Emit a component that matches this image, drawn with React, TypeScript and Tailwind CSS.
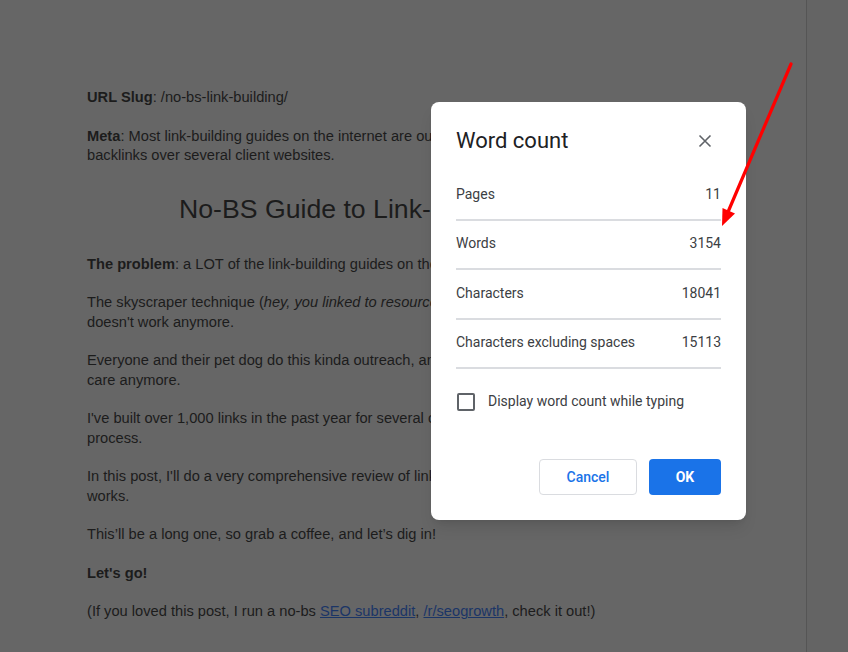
import React from "react";

const docFont = { fontFamily: '"Liberation Sans", Arial, sans-serif' };
const uiFont = { fontFamily: 'Roboto, "Noto Sans", Arial, sans-serif' };

function Line({ children }: { children: React.ReactNode }) {
  return <div className="whitespace-nowrap h-[19.5px] leading-[19.5px]">{children}</div>;
}

function Para({ children, className = "" }: { children: React.ReactNode; className?: string }) {
  return <div className={"mb-[19px] " + className}>{children}</div>;
}

function Row({ label, value }: { label: string; value: string }) {
  return (
    <div className="flex h-[49.5px] items-center justify-between border-b-2 border-[#dadce0] pb-[1px] text-[14px] text-[#3c4043]">
      <span>{label}</span>
      <span>{value}</span>
    </div>
  );
}

export default function App() {
  return (
    <div className="relative flex h-[652px] w-[848px] overflow-hidden bg-[#646464]">
      {/* Document page (dimmed) */}
      <div
        className="h-full w-[807px] shrink-0 overflow-hidden border-r border-[#555555] bg-[#666666] pl-[87px] pt-[88px] text-[14.67px] text-[#1c1c1c]"
        style={docFont}
      >
        <div className="w-[624px]">
          <Para>
            <Line>
              <b>URL Slug</b>: /no-bs-link-building/
            </Line>
          </Para>
          <div>
            <Line>
              <b>Meta</b>: Most link-building guides on the internet are outdated. Here's what works after building 1,000+
            </Line>
            <Line>backlinks over several client websites.</Line>
          </div>
          <div className="mb-[30px] mt-[27px] h-[32px] pl-[92px] text-left text-[26.67px] leading-[32px] whitespace-nowrap">
            No-BS Guide to Link-Building in 2021
          </div>
          <Para>
            <Line>
              <b>The problem</b>: a LOT of the link-building guides on the internet are super outdated.
            </Line>
          </Para>
          <Para>
            <Line>
              The skyscraper technique (<i>hey, you linked to resource X, here's a better one!</i>) and other old tricks
            </Line>
            <Line>doesn't work anymore.</Line>
          </Para>
          <Para>
            <Line>Everyone and their pet dog do this kinda outreach, and webmasters simply don't</Line>
            <Line>care anymore.</Line>
          </Para>
          <Para>
            <Line>I've built over 1,000 links in the past year for several clients, and learned a ton about the</Line>
            <Line>process.</Line>
          </Para>
          <Para>
            <Line>In this post, I'll do a very comprehensive review of link-building, and show you exactly what</Line>
            <Line>works.</Line>
          </Para>
          <Para>
            <Line>This’ll be a long one, so grab a coffee, and let’s dig in!</Line>
          </Para>
          <Para>
            <Line>
              <b>Let's go!</b>
            </Line>
          </Para>
          <Para>
            <Line>
              (If you loved this post, I run a no-bs <span className="text-[#1b3566] underline">SEO subreddit</span>,{" "}
              <span className="text-[#1b3566] underline">/r/seogrowth</span>, check it out!)
            </Line>
          </Para>
        </div>
      </div>

      {/* Word count dialog */}
      <div
        className="absolute left-[431px] top-[102px] flex h-[418px] w-[315px] flex-col rounded-[8px] bg-white px-[25px] pb-[25px] pt-[25px] shadow-lg"
        style={uiFont}
      >
        <div className="flex h-[28px] items-center justify-between">
          <span className="text-[22px] leading-[28px] text-[#202124]">Word count</span>
          <svg width="14" height="14" viewBox="0 0 14 14" className="mr-[9px]">
            <path d="M1.5 1.5 L12.5 12.5 M12.5 1.5 L1.5 12.5" stroke="#5f6368" strokeWidth="1.6" fill="none" />
          </svg>
        </div>
        <div className="mt-[16px] flex flex-col">
          <Row label="Pages" value="11" />
          <Row label="Words" value="3154" />
          <Row label="Characters" value="18041" />
          <Row label="Characters excluding spaces" value="15113" />
        </div>
        <div className="mt-[22px] flex items-center">
          <div className="h-[18px] w-[18px] rounded-[2px] border-2 border-[#5f6368] ml-[1px]" />
          <span className="ml-[13px] text-[14px] text-[#3c4043]">Display word count while typing</span>
        </div>
        <div className="mt-auto flex justify-end gap-[12px]">
          <button className="h-[36px] w-[98px] rounded-[4px] border border-[#dadce0] bg-white text-[14px] font-medium text-[#1a73e8]">
            Cancel
          </button>
          <button className="h-[36px] w-[72px] rounded-[4px] bg-[#1a73e8] text-[14px] font-bold text-white">
            OK
          </button>
        </div>
      </div>

      {/* Red annotation arrow */}
      <svg className="pointer-events-none absolute left-0 top-0" width="848" height="652">
        <line x1="791" y1="64" x2="728" y2="212" stroke="#ff0000" strokeWidth="3.2" strokeLinecap="round" />
        <polygon points="722,226 722.5,208 735,213.5" fill="#ff0000" />
      </svg>
    </div>
  );
}
